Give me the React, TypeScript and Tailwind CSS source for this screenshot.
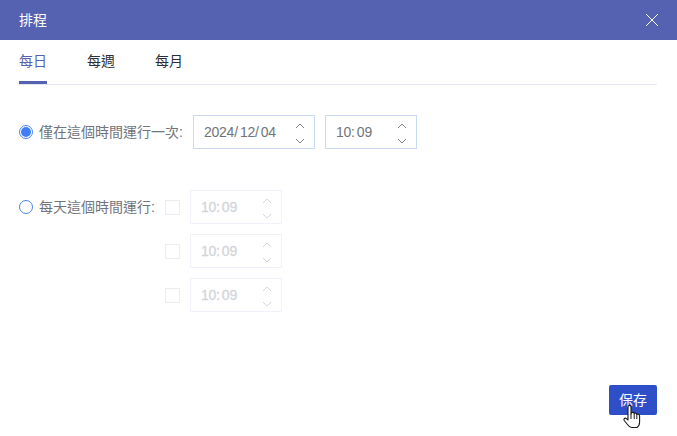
const font = { fontFamily: '"Liberation Sans", "Noto Sans CJK TC", sans-serif' };

function Chevrons({ disabled }: { disabled?: boolean }) {
  const color = disabled ? "#d5d7dc" : "#80848c";
  return (
    <div className="flex h-full w-[10px] flex-col items-center justify-between pb-[4px] pt-[7px]">
      <svg width="10" height="6" viewBox="0 0 10 6" fill="none">
        <path d="M1 5 L5 1 L9 5" stroke={color} strokeWidth="1" />
      </svg>
      <svg width="10" height="6" viewBox="0 0 10 6" fill="none">
        <path d="M1 1 L5 5 L9 1" stroke={color} strokeWidth="1" />
      </svg>
    </div>
  );
}

function TimeBox({ text, width, disabled }: { text: string; width: string; disabled?: boolean }) {
  return (
    <div
      className={`flex h-[34px] items-center justify-between border pl-[10px] pr-[9px] text-[14px] tracking-[-0.25px] [word-spacing:-1.5px] ${width} ${
        disabled ? "border-[#eff2fa] text-[#d3d5da] [-webkit-text-stroke:0.3px_#d3d5da]" : "border-[#c9daf3] text-[#70747c]"
      }`}
    >
      <span className="whitespace-pre">{text}</span>
      <Chevrons disabled={disabled} />
    </div>
  );
}

function Radio({ checked }: { checked?: boolean }) {
  return (
    <div className="flex h-[14px] w-[14px] shrink-0 items-center justify-center rounded-full border border-[#4b84f0]">
      {checked && <div className="h-[10px] w-[10px] rounded-full bg-[#3f7ef5]" />}
    </div>
  );
}

function CheckRow({ first }: { first?: boolean }) {
  return (
    <div className={`flex items-center gap-[10px] ${first ? "" : "mt-[10px]"}`}>
      <div className="h-[15px] w-[15px] border border-[#e9edf8]" />
      <TimeBox text="10: 09" width="w-[92px]" disabled />
    </div>
  );
}

export default function App() {
  return (
    <div className="relative h-[436px] w-[677px] overflow-hidden bg-white" style={font}>
      {/* Header */}
      <div className="flex h-10 items-center justify-between bg-[#5561b1] pl-[19px] pr-[18px] text-white">
        <span className="text-[14px]">排程</span>
        <svg width="14" height="14" viewBox="0 0 14 14" fill="none">
          <path d="M1 1 L13 13 M13 1 L1 13" stroke="#fff" strokeWidth="1" />
        </svg>
      </div>

      {/* Tabs */}
      <div className="ml-[19px] mr-[20px] flex h-[45px] items-start gap-10 border-b border-[#e4e6ef] text-[14px] text-[#2b2e36]">
        <div className="flex h-[44px] w-7 items-start border-b-[3px] border-[#5561b1] pt-[11px] text-[#5561b1]">每日</div>
        <div className="pt-[11px]">每週</div>
        <div className="pt-[11px]">每月</div>
      </div>

      <div className="px-[19px] pt-[30px] text-[14px] text-[#70747c]">
        {/* Run once */}
        <div className="flex items-center">
          <Radio checked />
          <span className="ml-[6px] w-[154px] whitespace-nowrap">僅在這個時間運行一次:</span>
          <TimeBox text="2024/ 12/ 04" width="w-[122px]" />
          <div className="w-[10px]" />
          <TimeBox text="10: 09" width="w-[92px]" />
        </div>

        {/* Run daily */}
        <div className="mt-[41px] flex items-start">
          <div className="flex h-[34px] items-center">
            <Radio />
            <span className="ml-[6px] w-[126px] whitespace-nowrap">每天這個時間運行:</span>
          </div>
          <div>
            <CheckRow first />
            <CheckRow />
            <CheckRow />
          </div>
        </div>
      </div>

      {/* Footer */}
      <div className="absolute bottom-[21px] right-[20px]">
        <button className="h-[30px] w-12 rounded-[2px] bg-[#2f4fc9] text-[14px] text-white">保存</button>
      </div>

      {/* Cursor */}
      <svg className="absolute left-[622px] top-[404px]" width="22" height="26" viewBox="0 0 22 26">
        <path
          d="M6 2.5 C6 1 9 1 9 2.5 V10 L9.5 8.8 C10.5 8 12 8.3 12.2 9.5 C13 8.8 14.6 9.2 14.8 10.4 C15.8 9.8 17.6 10.4 17.6 12 V18 C17.6 20 16.5 22.5 15 23.5 H9.5 C8 23.5 7 22.5 5.5 20.5 L2.2 16.5 C1.2 15 3 13.4 4.4 14.6 L6 16 Z"
          fill="#fff"
          stroke="#1a1a1a"
          strokeWidth="1.1"
          strokeLinejoin="round"
        />
        <path d="M9 10 V15 M12.2 9.5 V15 M14.8 10.4 V15" stroke="#1a1a1a" strokeWidth="1" fill="none" />
      </svg>
    </div>
  );
}
